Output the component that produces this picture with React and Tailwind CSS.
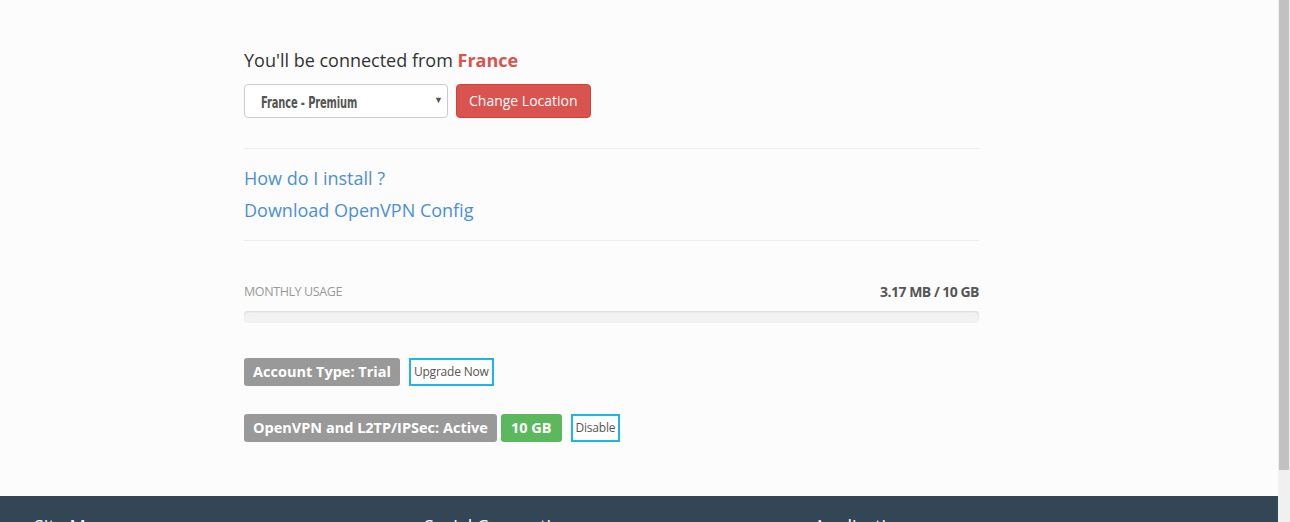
import React from "react";

export default function App() {
  return (
    <div className="flex w-[1290px] h-[522px] overflow-hidden bg-[#fcfcfc]" style={{ fontFamily: '"Open Sans", sans-serif' }}>
      <div className="flex flex-col w-[1278px] h-full">
        <main className="flex-1 pl-[244px] pt-[47px]">
          <div className="w-[735px]">
            <h3 className="text-[18px] leading-[26px] text-[#333]">
              You'll be connected from <span className="font-bold text-[#d9534f]">France</span>
            </h3>
            <div className="flex gap-[8px] mt-[11px]">
              <div className="relative w-[204px] h-[34px] border border-[#ccc] rounded-[4px] bg-white flex items-center pl-[16px] pt-[5px]">
                <span className="inline-block origin-left scale-x-[0.66] text-[15px] font-bold text-[#555] tracking-[-0.2px] whitespace-nowrap" style={{ fontFamily: '"DejaVu Sans", sans-serif' }}>
                  France - Premium
                </span>
                <span className="absolute right-[4px] top-[8px] text-[9px] text-[#555]">▼</span>
              </div>
              <button className="h-[34px] px-[12px] bg-[#d9534f] border border-[#d43f3a] rounded-[4px] text-white text-[14px] leading-none">
                Change Location
              </button>
            </div>
            <div className="border-t border-[#eee] mt-[30px]" />
            <div className="pt-[16px] flex flex-col gap-[6px]">
              <a className="text-[18px] leading-[26px] text-[#4a90d9]">How do I install ?</a>
              <a className="text-[18px] leading-[26px] text-[#4a90d9]">Download OpenVPN Config</a>
            </div>
            <div className="border-t border-[#eee] mt-[17px]" />
            <div className="flex justify-between items-end mt-[40px]">
              <span className="text-[12.5px] uppercase text-[#999] tracking-[-0.4px]">Monthly Usage</span>
              <span className="text-[14px] font-bold text-[#555] tracking-[-0.5px]">3.17 MB / 10 GB</span>
            </div>
            <div className="mt-[9px] h-[12px] rounded-[4px] bg-[#f2f2f2] shadow-[inset_0_1px_2px_rgba(0,0,0,0.1)]" />
            <div className="flex items-center gap-[9px] mt-[35px]">
              <span className="h-[28px] px-[9px] flex items-center rounded-[3px] bg-[#999] text-white text-[14.5px] font-bold">Account Type: Trial</span>
              <span className="h-[28px] px-[3px] flex items-center border-2 border-[#1cb7e3] text-[12px] text-[#555] bg-white tracking-[-0.2px]">Upgrade Now</span>
            </div>
            <div className="flex items-center mt-[28px]">
              <span className="h-[28px] px-[9px] flex items-center rounded-[3px] bg-[#999] text-white text-[14.5px] font-bold">OpenVPN and L2TP/IPSec: Active</span>
              <span className="ml-[4px] h-[28px] px-[10px] flex items-center rounded-[3px] bg-[#5cb85c] text-white text-[14.5px] font-bold">10 GB</span>
              <span className="ml-[9px] h-[28px] px-[3px] flex items-center border-2 border-[#1cb7e3] text-[12px] text-[#555] bg-white tracking-[-0.2px]">Disable</span>
            </div>
          </div>
        </main>
        <footer className="h-[26px] bg-[#334656] flex pl-[34px] text-white text-[18px] leading-none pt-[21px]">
          <div className="w-[390px]">Site Map</div>
          <div className="w-[390px]">Social Connection</div>
          <div className="w-[390px]">Applications</div>
        </footer>
      </div>
      <div className="w-[12px] h-full bg-[#f0f0f0] flex justify-center">
        <div className="w-[10px] h-[470px] bg-[#c1c1c1]" />
      </div>
    </div>
  );
}
